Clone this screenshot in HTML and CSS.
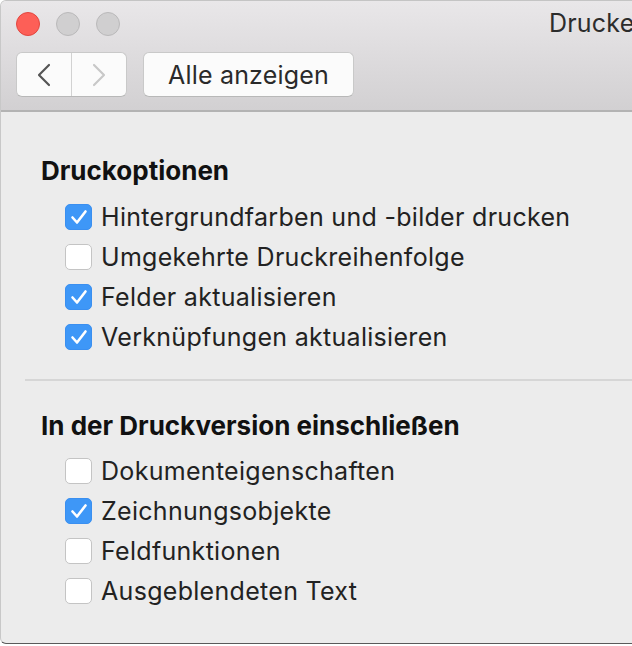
FILE: index.html
```html
<!DOCTYPE html>
<html lang="de">
<head>
<meta charset="utf-8">
<title>Drucken</title>
<link rel="stylesheet" href="styles.css">
</head>
<body>
<div class="window">
  <div class="titlebar">
    <div class="title-row">
      <div class="lights">
        <span class="light red"></span>
        <span class="light gray"></span>
        <span class="light gray"></span>
      </div>
      <div class="title">Drucken</div>
    </div>
    <div class="toolbar">
      <div class="seg">
        <div class="seg-btn">
          <svg width="14" height="24" viewBox="0 0 14 24"><path d="M12 2 L2 12 L12 22" fill="none" stroke="#555" stroke-width="2.2" stroke-linecap="round" stroke-linejoin="round"/></svg>
        </div>
        <div class="seg-btn">
          <svg width="14" height="24" viewBox="0 0 14 24"><path d="M2 2 L12 12 L2 22" fill="none" stroke="#c8c8c8" stroke-width="2.2" stroke-linecap="round" stroke-linejoin="round"/></svg>
        </div>
      </div>
      <div class="btn">Alle anzeigen</div>
    </div>
  </div>
  <div class="content">
    <section class="group">
      <h2 class="heading">Druckoptionen</h2>
      <ul class="opts">
        <li class="opt"><span class="cb on"><svg width="18" height="16" viewBox="0 0 18 16"><path d="M2.5 8.5 L7 13.5 L15.5 2.5" fill="none" stroke="#fff" stroke-width="2.6" stroke-linecap="round" stroke-linejoin="round"/></svg></span>Hintergrundfarben und -bilder drucken</li>
        <li class="opt"><span class="cb"></span>Umgekehrte Druckreihenfolge</li>
        <li class="opt"><span class="cb on"><svg width="18" height="16" viewBox="0 0 18 16"><path d="M2.5 8.5 L7 13.5 L15.5 2.5" fill="none" stroke="#fff" stroke-width="2.6" stroke-linecap="round" stroke-linejoin="round"/></svg></span>Felder aktualisieren</li>
        <li class="opt"><span class="cb on"><svg width="18" height="16" viewBox="0 0 18 16"><path d="M2.5 8.5 L7 13.5 L15.5 2.5" fill="none" stroke="#fff" stroke-width="2.6" stroke-linecap="round" stroke-linejoin="round"/></svg></span>Verknüpfungen aktualisieren</li>
      </ul>
    </section>
    <hr class="sep">
    <section class="group second">
      <h2 class="heading">In der Druckversion einschließen</h2>
      <ul class="opts">
        <li class="opt"><span class="cb"></span>Dokumenteigenschaften</li>
        <li class="opt"><span class="cb on"><svg width="18" height="16" viewBox="0 0 18 16"><path d="M2.5 8.5 L7 13.5 L15.5 2.5" fill="none" stroke="#fff" stroke-width="2.6" stroke-linecap="round" stroke-linejoin="round"/></svg></span>Zeichnungsobjekte</li>
        <li class="opt"><span class="cb"></span>Feldfunktionen</li>
        <li class="opt"><span class="cb"></span>Ausgeblendeten Text</li>
      </ul>
    </section>
  </div>
</div>
</body>
</html>
```

FILE: styles.css
```css
html, body {
  margin: 0;
  padding: 0;
  background: #ffffff;
  overflow: hidden;
}
body {
  width: 632px;
  height: 646px;
  font-family: Inter, "Liberation Sans", sans-serif;
}
.window {
  width: 700px;
  height: 644px;
  box-sizing: border-box;
  border-radius: 6px;
  border-top: 1px solid #c4c4c4;
  border-left: 1px solid #c8c8c8;
  border-bottom: 1px solid #5a5a5a;
  overflow: hidden;
  background: #ececec;
  display: flex;
  flex-direction: column;
}
.titlebar {
  height: 109px;
  background: linear-gradient(#e9e7e9, #d2d0d2);
  border-bottom: 2px solid #b3b3b3;
  display: flex;
  flex-direction: column;
}
.title-row {
  display: flex;
  align-items: center;
  height: 46px;
  padding-left: 15px;
}
.lights {
  display: flex;
  gap: 16px;
}
.light {
  width: 24px;
  height: 24px;
  border-radius: 50%;
  box-sizing: border-box;
}
.light.red {
  background: #fd5f57;
  border: 1px solid #e2463f;
}
.light.gray {
  background: #d0cfd0;
  border: 1px solid #bab9ba;
}
.title {
  margin-left: 429px;
  font-size: 25px;
  letter-spacing: 0.2px;
  color: #2c2c2c;
  white-space: nowrap;
  margin-top: -2px;
}
.toolbar {
  display: flex;
  gap: 16px;
  padding-left: 15px;
  margin-top: 5px;
}
.seg, .btn {
  height: 45px;
  box-sizing: border-box;
  background: #fbfbfb;
  border: 1px solid #c9c9c9;
  border-bottom-color: #b8b8b8;
  border-radius: 6px;
}
.seg {
  display: flex;
  width: 111px;
}
.seg-btn {
  flex: 1;
  display: flex;
  align-items: center;
  justify-content: center;
}
.seg-btn + .seg-btn {
  border-left: 1px solid #d2d2d2;
}
.btn {
  width: 211px;
  display: flex;
  align-items: center;
  justify-content: center;
  font-size: 25px;
  letter-spacing: 0.2px;
  color: #2a2a2a;
}
.content {
  flex: 1;
  padding-top: 43px;
}
.group {
  padding-left: 40px;
}
.heading {
  margin: 0;
  font-size: 26px;
  font-weight: 700;
  color: #111;
  line-height: 32px;
}
.opts {
  list-style: none;
  margin: 10px 0 0 0;
  padding: 0 0 0 24px;
}
.second .opts {
  margin-top: 9px;
}
.opt {
  display: flex;
  align-items: center;
  height: 40px;
  font-size: 25px;
  letter-spacing: 0.3px;
  color: #222;
  white-space: nowrap;
}
.cb {
  width: 27px;
  height: 26px;
  box-sizing: border-box;
  border-radius: 5px;
  background: #ffffff;
  border: 1px solid #c4c4c4;
  margin-right: 9px;
  display: flex;
  align-items: center;
  justify-content: center;
}
.cb.on {
  background: #3e97f7;
  border-color: #3a8ff0;
}
.sep {
  margin: 22px 0 0 24px;
  border: 0;
  height: 2px;
  background: #d6d6d6;
}
.second {
  padding-top: 29px;
}
```
